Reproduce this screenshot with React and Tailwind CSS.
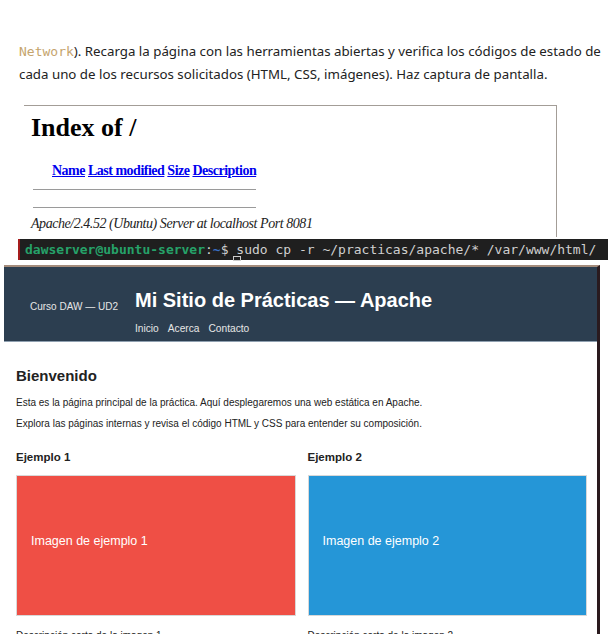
import React from 'react';

const serif = { fontFamily: '"Liberation Serif", serif' };

const IndexShot = () => (
  <div className="ml-[24px] w-[533px] h-[132px] border-t border-r border-[#a39d97] pl-[7px] overflow-hidden" style={serif}>
    <h1 className="text-[26px] font-bold leading-none mt-[9px] text-black">Index of /</h1>
    <div className="mt-[19px] ml-[21px] text-[14px] font-bold text-[#0000ee] flex gap-[3px] tracking-[-0.5px]">
      <span className="underline">Name</span>
      <span className="underline">Last modified</span>
      <span className="underline">Size</span>
      <span className="underline">Description</span>
    </div>
    <div className="ml-[2px] w-[223px] h-px bg-[#9a9a9a] mt-[8px]" />
    <div className="ml-[2px] w-[223px] h-px bg-[#9a9a9a] mt-[17px]" />
    <p className="italic text-[14px] text-[#222] mt-[5px] tracking-[-0.45px]">
      Apache/2.4.52 (Ubuntu) Server at localhost Port 8081
    </p>
  </div>
);

const Terminal = () => (
  <div
    className="ml-[18px] mt-[2px] h-[21px] bg-[#1f1f1f] border-l-2 border-[#a51d1d] pl-[5px] text-[13px] leading-[21px] whitespace-nowrap relative"
    style={{ fontFamily: '"DejaVu Sans Mono", monospace' }}
  >
    <span className="text-[#26a269] font-bold">dawserver@ubuntu-server</span>
    <span className="text-[#d0d0d0]">:</span>
    <span className="text-[#3a6fc4] font-bold">~</span>
    <span className="text-[#d0d0d0]">$ sudo cp -r ~/practicas/apache/* /var/www/html/</span>
    <span className="absolute left-[213px] top-[17px] w-[8px] h-[5px] border border-[#ccc]" />
  </div>
);

const ImageBox = ({ color, label }) => (
  <div className={`h-[141px] border border-[#d8d8d8] flex items-center px-[14px] pb-[8px] ${color}`}>
    <span className="text-white text-[12.5px]">{label}</span>
  </div>
);

const SiteShot = () => (
  <div
    className="mt-[5px] ml-[4px] w-[596px] border-t-2 border-[#a48c7c] border-r-[3px] border-r-[#2a1a1e] text-[#222]"
    style={{ fontFamily: '"Liberation Sans", Arial, sans-serif' }}
  >
    <header className="bg-[#2c3e50] h-[75px] border-b border-[#8fa0b0] flex pl-[26px] text-white">
      <div className="w-[105px] pt-[32px] text-[10px] text-[#e6e6e6]">Curso DAW — UD2</div>
      <div className="flex flex-col pt-[21px]">
        <h1 className="text-[20px] font-bold leading-[24px]">Mi Sitio de Prácticas — Apache</h1>
        <nav className="flex gap-[9px] text-[10.2px] mt-[9px] text-[#e6e6e6]">
          <span>Inicio</span>
          <span>Acerca</span>
          <span>Contacto</span>
        </nav>
      </div>
    </header>
    <main className="px-[12px] pt-[24px]">
      <h2 className="text-[15px] font-bold leading-[20px]">Bienvenido</h2>
      <p className="text-[10px] mt-[10px] leading-[13px]">
        Esta es la página principal de la práctica. Aquí desplegaremos una web estática en Apache.
      </p>
      <p className="text-[10px] mt-[8px] leading-[13px]">
        Explora las páginas internas y revisa el código HTML y CSS para entender su composición.
      </p>
      <div className="grid grid-cols-2 gap-[12px] mt-[20px] w-[571px]">
        <div>
          <h3 className="text-[11.5px] font-bold leading-[14px]">Ejemplo 1</h3>
          <div className="mt-[11px]">
            <ImageBox color="bg-[#ef4f45]" label="Imagen de ejemplo 1" />
          </div>
          <p className="text-[10px] mt-[12px]">Descripción corta de la imagen 1</p>
        </div>
        <div>
          <h3 className="text-[11.5px] font-bold leading-[14px]">Ejemplo 2</h3>
          <div className="mt-[11px]">
            <ImageBox color="bg-[#2596d7]" label="Imagen de ejemplo 2" />
          </div>
          <p className="text-[10px] mt-[12px]">Descripción corta de la imagen 2</p>
        </div>
      </div>
    </main>
  </div>
);

export default function App() {
  return (
    <div className="w-[608px] h-[634px] overflow-hidden bg-white">
      <div
        className="pt-[40px] pl-[19px] text-[13.3px] leading-[22px] text-[#222] whitespace-nowrap"
        style={{ fontFamily: '"Noto Sans", sans-serif' }}
      >
        <p>
          <span className="text-[#c5a46d] text-[13px]" style={{ fontFamily: '"DejaVu Sans Mono", monospace' }}>
            Network
          </span>
          ). Recarga la página con las herramientas abiertas y verifica los códigos de estado de
        </p>
        <p>cada uno de los recursos solicitados (HTML, CSS, imágenes). Haz captura de pantalla.</p>
      </div>
      <div className="mt-[20px]">
        <IndexShot />
        <Terminal />
        <SiteShot />
      </div>
    </div>
  );
}
